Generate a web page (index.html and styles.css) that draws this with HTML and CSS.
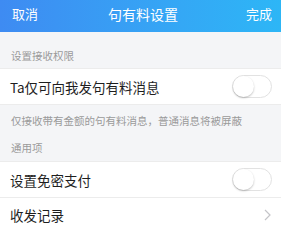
FILE: index.html
```html
<!DOCTYPE html>
<html lang="zh">
<head>
<meta charset="utf-8">
<link rel="stylesheet" href="styles.css">
</head>
<body>
<div class="header">
  <span class="nav-btn">取消</span>
  <span class="title">句有料设置</span>
  <span class="nav-btn">完成</span>
</div>
<div class="section-label first">设置接收权限</div>
<div class="group">
  <div class="row">
    <span class="row-text">Ta仅可向我发句有料消息</span>
    <span class="switch"><span class="knob"></span></span>
  </div>
</div>
<div class="desc">仅接收带有金额的句有料消息，普通消息将被屏蔽</div>
<div class="section-label second">通用项</div>
<div class="group">
  <div class="row">
    <span class="row-text">设置免密支付</span>
    <span class="switch"><span class="knob"></span></span>
  </div>
  <div class="row divided">
    <span class="row-text">收发记录</span>
    <svg class="chevron" width="7" height="12" viewBox="0 0 7 12"><path d="M1 1 L6 6 L1 11" fill="none" stroke="#c4c4c8" stroke-width="1.2"/></svg>
  </div>
</div>
</body>
</html>
```
FILE: styles.css
```css
* { box-sizing: border-box; }
html, body {
  margin: 0;
  padding: 0;
  background: #f4f5f7;
  font-family: "Noto Sans CJK SC", "Noto Sans", sans-serif;
  overflow: hidden;
}
.header {
  height: 32px;
  display: flex;
  align-items: center;
  justify-content: space-between;
  padding: 0 9px 4px 12px;
  background: linear-gradient(90deg, #3e8bf2 0%, #35a6f5 60%, #2db6f6 100%);
  color: #fff;
}
.nav-btn {
  font-size: 13px;
  line-height: 16px;
}
.title {
  font-size: 14px;
  line-height: 16px;
  margin-left: 2px;
}
.section-label {
  font-size: 10.5px;
  line-height: 14px;
  color: #9a9a9a;
  padding-left: 11px;
}
.section-label.first {
  padding-top: 17px;
  padding-bottom: 5px;
}
.section-label.second {
  padding-top: 13px;
  padding-bottom: 6px;
}
.desc {
  font-size: 10.5px;
  line-height: 14px;
  color: #9a9a9a;
  padding: 9px 0 0 11px;
}
.group {
  background: #fff;
  border-top: 1px solid #ececec;
  border-bottom: 1px solid #ececec;
}
.row {
  height: 35px;
  display: flex;
  align-items: center;
  justify-content: space-between;
  padding: 0 9px 0 10px;
}
.row.divided {
  border-top: 1px solid #ececec;
}
.row-text {
  font-size: 13.5px;
  line-height: 18px;
  color: #1e1e1e;
}
.switch {
  width: 40px;
  height: 23px;
  border-radius: 12px;
  border: 1px solid #e2e2e2;
  background: #fff;
  display: flex;
  align-items: center;
}
.knob {
  width: 21px;
  height: 21px;
  border-radius: 50%;
  background: #fff;
  box-shadow: 0 1px 2px rgba(0,0,0,0.25);
}
.chevron {
  margin-right: 1px;
}
```
